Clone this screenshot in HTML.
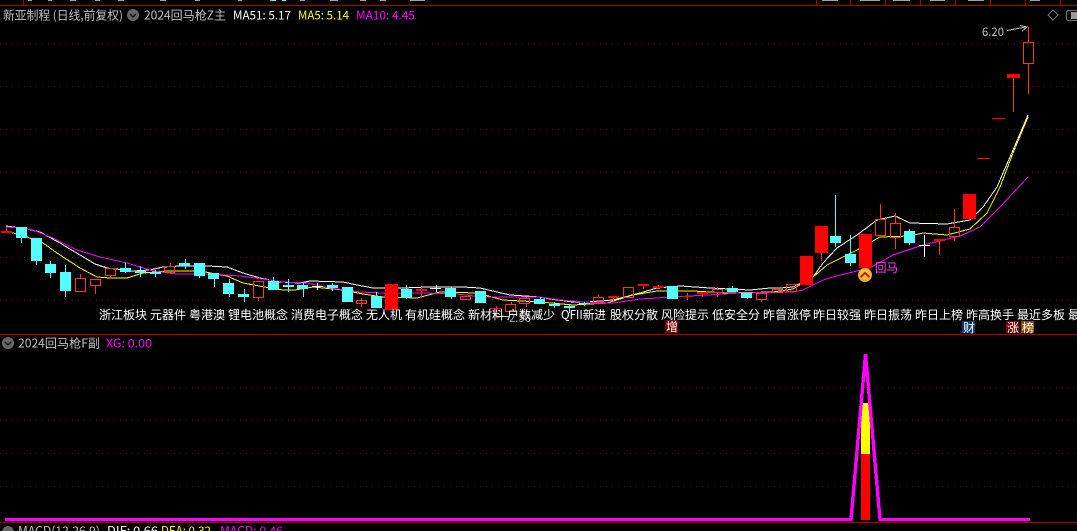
<!DOCTYPE html>
<html><head><meta charset="utf-8">
<style>
html,body{margin:0;padding:0;background:#000;width:1077px;height:531px;overflow:hidden}
svg{display:block}
text{font-family:"WenQuanYi Zen Hei","Noto Sans CJK SC","Liberation Sans",sans-serif;font-size:12px}
.crisp *{shape-rendering:crispEdges}
</style></head><body>
<svg width="1077" height="531" viewBox="0 0 1077 531" xmlns="http://www.w3.org/2000/svg">
<rect width="1077" height="531" fill="#000"/>
<g class="crisp">
<!-- frame -->
<path d="M0 5.5H1077M23.5 0V5M816.5 0V5M850.5 0V5M885.5 0V5M920.5 0V5M955.5 0V5M990.5 0V5M1025.5 0V5M1060.5 0V5M0 334.5H1077M0 522.5H1077" stroke="#b00000" fill="none"/>
<path d="M28 0V1H32V0ZM48 0V1H52V0ZM70 0V1H76V0ZM95 0V1H100V0ZM118 0V1H124V0ZM160 0V1H166V0ZM195 0V1H200V0ZM238 0V1H242V0ZM270 0V1H275V0ZM300 0V1H305V0ZM330 0V1H338V0ZM360 0V1H366V0ZM380 0V1H386V0ZM410 0V1H425V0ZM822 0V1H838V0ZM860 0V1H880V0ZM893 0V1H910V0ZM930 0V1H945V0ZM968 0V1H984V0ZM1030 0V1H1040V0Z" fill="#a0a0a0"/>
<path d="M272 0V1H276V0ZM282 0V1H286V0Z" fill="#54ffff"/>
<!-- grid -->
<g stroke="#700000" stroke-dasharray="1 5" fill="none">
<path d="M0 43.5H1077M0 86.5H1077M0 129.5H1077M0 172.5H1077M0 214.5H1077M0 257.5H1077M0 300.5H1077M0 387.5H1077M0 420.5H1077M0 453.5H1077M0 486.5H1077"/>
</g>
<!-- MA lines -->
<polyline fill="none" stroke="#fff" points="6,226 27,229 40,232 60,243 80,255 95,264 107,268 133,271 150,270 163,267 180,266 207,266 227,267 243,273 260,278 270,280 280,282 300,283 310,281 343,282 357,285 373,288 385,288 403,288 427,287 437,287 463,287 480,288 497,292 510,295 540,297 550,299 573,302 587,302 613,300 640,293 657,288 680,286 710,288 750,290 770,288 780,288 793,287 813,277 823,263 837,248 857,235 877,220 895,216 910,223 947,224 970,220 983,207 997,187 1010,157 1028,115"/>
<polyline fill="none" stroke="#ffff00" points="6,231 27,237 43,243 57,253 80,268 97,277 110,278 127,278 143,273 167,271 200,271 227,276 243,283 270,288 283,290 295,290 313,287 343,290 363,294 383,297 417,298 440,292 477,293 503,300 540,302 573,305 607,303 633,295 657,291 693,291 727,293 773,292 793,289 813,277 827,265 857,250 880,237 910,236 923,233 947,235 970,229 987,213 1000,187 1013,153 1028,117"/>
<polyline fill="none" stroke="#ff00ff" points="6,227 20,228 33,230 53,238 77,250 100,257 127,263 153,271 177,274 213,274 240,276 270,280 283,282 307,283 330,288 360,292 383,293 420,293 457,294 483,297 510,297 540,297 560,300 583,302 613,303 640,299 673,297 707,295 740,293 793,292 803,290 823,280 840,275 870,268 893,255 923,245 960,236 980,227 1000,207 1028,177"/>
<!-- wicks cyan -->
<path fill="none" stroke="#54ffff" d="M21.5 227V243M36.5 238V265M50.5 261V278M65.5 265V297M125.5 263V273M140.5 266V277M155.5 270V277M185.5 259V269M199.5 263V278M214.5 273V287M229.5 279V297M244.5 289V302M273.5 277V290M288.5 279V292M303.5 283V297M332.5 283V291M347.5 287V302M376.5 292V308M406.5 285V299M451.5 287V299M481.5 291V303M540.5 297V304M554.5 302V308M569.5 305V313M584.5 302V306M672.5 286V299M732.5 286V292M747.5 293V299M835.5 195V247M850.5 235V266M909.5 229V245"/>
<!-- bodies cyan -->
<g fill="#54ffff">
<rect x="16" y="227" width="11" height="11"/><rect x="31" y="238" width="11" height="23"/><rect x="45" y="264" width="11" height="9"/><rect x="60" y="272" width="11" height="19"/>
<rect x="120" y="268" width="11" height="4"/><rect x="135" y="271" width="11" height="2"/><rect x="150" y="272" width="11" height="2"/><rect x="179" y="263" width="11" height="3"/>
<rect x="194" y="263" width="11" height="13"/><rect x="208" y="273" width="11" height="6"/><rect x="223" y="283" width="11" height="11"/><rect x="238" y="294" width="11" height="3"/>
<rect x="268" y="281" width="11" height="9"/><rect x="283" y="285" width="11" height="2"/><rect x="297" y="285" width="11" height="4"/><rect x="327" y="285" width="11" height="3"/>
<rect x="342" y="287" width="11" height="15"/><rect x="371" y="296" width="11" height="12"/><rect x="401" y="289" width="11" height="9"/><rect x="445" y="288" width="11" height="9"/>
<rect x="475" y="291" width="11" height="12"/><rect x="534" y="299" width="11" height="5"/><rect x="549" y="304" width="11" height="2"/><rect x="564" y="306" width="11" height="2"/>
<rect x="579" y="303" width="11" height="1"/><rect x="667" y="286" width="11" height="13"/><rect x="727" y="288" width="11" height="4"/><rect x="741" y="293" width="11" height="5"/>
<rect x="830" y="236" width="11" height="7"/><rect x="845" y="254" width="11" height="9"/><rect x="904" y="231" width="11" height="12"/>
</g>
<!-- wicks red -->
<path fill="none" stroke="#ff3232" d="M6.5 227V232M80.5 274V278M95.5 285V294M110.5 275V278M170.5 263V266M170.5 272V274M258.5 297V301M361.5 298V307M421.5 287V297M496.5 306V318M511.5 302V304M526.5 297V298M526.5 303V307M598.5 295V297M613.5 296V301M643.5 284V289M658.5 285V288M687.5 293V300M702.5 292V297M717.5 287V289M717.5 292V297M761.5 299V302M776.5 287V289M821.5 253V261M880.5 204V219M895.5 213V223M895.5 237V249M939.5 239V255M954.5 209V227M954.5 236V241M1013.5 78V112M1028.5 27V42M1028.5 63V94"/>
<!-- hollow red bodies -->
<g fill="none" stroke="#ff3232">
<rect x="75.5" y="278.5" width="10" height="13"/><rect x="90.5" y="279.5" width="10" height="6"/><rect x="105.5" y="268.5" width="10" height="7"/><rect x="164.5" y="266.5" width="10" height="6"/>
<rect x="253.5" y="281.5" width="10" height="16"/><rect x="356.5" y="300.5" width="10" height="3"/><rect x="460.5" y="296.5" width="10" height="3"/><rect x="505.5" y="304.5" width="10" height="7"/>
<rect x="519.5" y="298.5" width="10" height="5"/><rect x="593.5" y="297.5" width="10" height="6"/><rect x="623.5" y="287.5" width="10" height="10"/><rect x="712.5" y="289.5" width="10" height="3"/>
<rect x="756.5" y="293.5" width="10" height="6"/><rect x="772.5" y="289.5" width="10" height="3"/><rect x="786.5" y="284.5" width="10" height="7"/><rect x="875.5" y="219.5" width="10" height="16"/>
<rect x="890.5" y="223.5" width="10" height="14"/><rect x="949.5" y="227.5" width="10" height="9"/><rect x="1023.5" y="42.5" width="10" height="21"/>
</g>
<!-- filled red -->
<g fill="#ff0000">
<rect x="1" y="231" width="11" height="2"/><rect x="385" y="284" width="13" height="26"/><rect x="416" y="289" width="11" height="2"/><rect x="490" y="308" width="11" height="1"/>
<rect x="608" y="296" width="11" height="2"/><rect x="638" y="284" width="11" height="2"/><rect x="653" y="286" width="11" height="2"/><rect x="682" y="296" width="11" height="1"/>
<rect x="697" y="292" width="11" height="2"/><rect x="800" y="256" width="13" height="29"/><rect x="815" y="226" width="13" height="27"/><rect x="859" y="234" width="13" height="34"/>
<rect x="934" y="239" width="11" height="2"/><rect x="963" y="194" width="13" height="25"/><rect x="977" y="158" width="13" height="1"/><rect x="992" y="118" width="13" height="1"/>
<rect x="1007" y="74" width="13" height="4"/>
</g>
<!-- white crosses -->
<path fill="none" stroke="#fff" d="M317.5 283V290M312 286.5H323M436.5 285V292M430 288.5H441M924.5 235V257M919 245.5H930"/>
<path fill="none" stroke="#c0c0c0" d="M497 316.5H509"/>
<!-- arrow -->
<path fill="none" stroke="#c0c0c0" d="M1007 30.5L1026 27M1020 25.5L1027 27L1022 31"/>
<!-- badges -->
<rect x="665" y="320" width="13" height="13" fill="#800000"/>
<rect x="962" y="321" width="13" height="12" fill="#0a3a70"/>
<rect x="1006" y="321" width="13" height="12" fill="#800000"/>
<rect x="1021" y="321" width="13" height="12" fill="#8a4a00"/>
<!-- sub panel -->
<rect x="861" y="403" width="9" height="51" fill="#ffff00"/>
<rect x="861" y="454" width="9" height="66" fill="#ff0000"/>
<polyline fill="none" stroke="#ff00ff" stroke-width="3.4" points="5,519.5 851,519.5 865.5,354 880,519.5 1030,519.5"/>
</g>
<!-- header icons -->
<circle cx="133" cy="15" r="6" fill="#666"/><path d="M130 14l3 3 3-3" fill="none" stroke="#111" stroke-width="1.4"/>
<circle cx="8" cy="343" r="6" fill="#666"/><path d="M5 342l3 3 3-3" fill="none" stroke="#111" stroke-width="1.4"/>
<circle cx="8" cy="532" r="6" fill="#666"/>
<path d="M1053 10l5 5-5 5-5-5z" fill="none" stroke="#777"/>
<rect x="1066.500" y="10.500" width="14" height="10" rx="2" fill="none" stroke="#777"/><rect x="1071" y="12" width="6" height="7" fill="#999"/>
<!-- icon gold -->
<circle cx="865" cy="275" r="7" fill="#f0a820"/><circle cx="865" cy="274" r="5.500" fill="#f7c040"/><path d="M860.500 277l4.500-4 4.500 4" fill="none" stroke="#c02000" stroke-width="2"/>
<!-- headers -->
<text x="3" y="19.500" fill="#c0c0c0" textLength="120" lengthAdjust="spacingAndGlyphs">新亚制程 (日线,前复权)</text>
<text x="144" y="19.500" fill="#c0c0c0" textLength="82" lengthAdjust="spacingAndGlyphs">2024回马枪Z主</text>
<text x="233" y="19.500" fill="#fff" textLength="58" lengthAdjust="spacingAndGlyphs">MA51: 5.17</text>
<text x="298" y="19.500" fill="#ffff00" textLength="51" lengthAdjust="spacingAndGlyphs">MA5: 5.14</text>
<text x="356" y="19.500" fill="#ff00ff" textLength="59" lengthAdjust="spacingAndGlyphs">MA10: 4.45</text>
<text x="18" y="347.500" fill="#c0c0c0" textLength="82" lengthAdjust="spacingAndGlyphs">2024回马枪F副</text>
<text x="106" y="347.500" fill="#ff00ff" textLength="46" lengthAdjust="spacingAndGlyphs">XG: 0.00</text>
<text x="18" y="535" fill="#c0c0c0" textLength="82" lengthAdjust="spacingAndGlyphs">MACD(12,26,9)</text>
<text x="107" y="535" fill="#fff" textLength="51" lengthAdjust="spacingAndGlyphs">DIF: 0.66</text>
<text x="161" y="535" fill="#ffff00" textLength="50" lengthAdjust="spacingAndGlyphs">DEA: 0.32</text>
<text x="220" y="535" fill="#ff00ff" textLength="63" lengthAdjust="spacingAndGlyphs">MACD: 0.46</text>
<text x="982" y="36" fill="#c0c0c0" textLength="22" lengthAdjust="spacingAndGlyphs">6.20</text>
<text x="509" y="322" fill="#a0a0a0" textLength="22" lengthAdjust="spacingAndGlyphs">2.50</text>
<!-- labels -->
<g fill="#fff">
<text x="99" y="319">浙江板块</text>
<text x="150" y="319">元器件</text>
<text x="189" y="319">粤港澳</text>
<text x="228" y="319">锂电池概念</text>
<text x="291" y="319">消费电子概念</text>
<text x="366" y="319">无人机</text>
<text x="405" y="319">有机硅概念</text>
<text x="468" y="319">新材料</text>
<text x="507" y="319">户数减少</text>
<text x="561" y="319" textLength="45" lengthAdjust="spacingAndGlyphs">QFII新进</text>
<text x="610" y="319">股权分散</text>
<text x="661" y="319">风险提示</text>
<text x="712" y="319">低安全分</text>
<text x="763" y="319">昨曾涨停</text>
<text x="813" y="319">昨日较强</text>
<text x="864" y="319">昨日振荡</text>
<text x="915" y="319">昨日上榜</text>
<text x="966" y="319">昨高换手</text>
<text x="1017" y="319">最近多板</text>
<text x="1068" y="319">最</text>
<text x="666" y="331">增</text>
<text x="963" y="332">财</text>
<text x="1007" y="332">涨</text>
<text x="1022" y="332">榜</text>
</g>
<text x="875" y="272" fill="#ff40ff" textLength="23" lengthAdjust="spacingAndGlyphs">回马</text>
</svg>
</body></html>
